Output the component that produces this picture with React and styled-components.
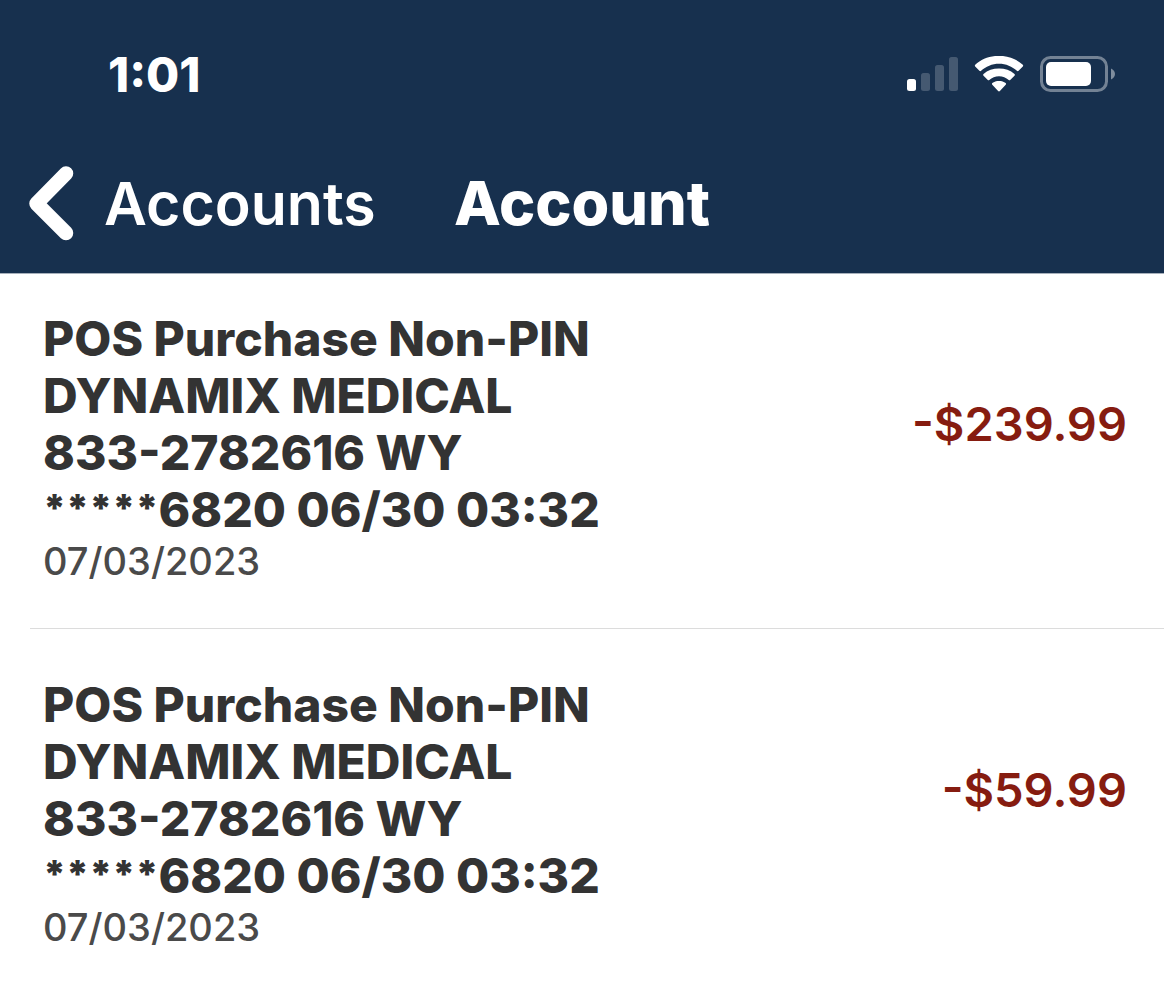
import React from "react";
import styled, { createGlobalStyle } from "styled-components";

const transactions = [
  {
    id: 1,
    lines: ["POS Purchase Non-PIN", "DYNAMIX MEDICAL", "833-2782616 WY"],
    mask: "*****",
    card: "6820 06/30 03:32",
    date: "07/03/2023",
    amount: "-$239.99",
  },
  {
    id: 2,
    lines: ["POS Purchase Non-PIN", "DYNAMIX MEDICAL", "833-2782616 WY"],
    mask: "*****",
    card: "6820 06/30 03:32",
    date: "07/03/2023",
    amount: "-$59.99",
  },
];

const SignalIcon = () => (
  <svg width="52" height="36" viewBox="0 0 52 36" fill="#fff" aria-hidden="true">
    <rect x="1" y="22" width="9" height="12" rx="2.500" />
    <rect x="15" y="16" width="9" height="18" rx="2.500" opacity="0.2" />
    <rect x="29" y="8" width="9" height="26" rx="2.500" opacity="0.2" />
    <rect x="43" y="0" width="9" height="34" rx="2.500" opacity="0.2" />
  </svg>
);

const WifiIcon = () => (
  <svg width="50" height="38" viewBox="0 0 50 38" fill="#fff" aria-hidden="true">
    <path d="M25 7.700c6.900 0 13.200 2.700 17.900 7.100.5.500 1.200.5 1.700 0l4.200-4.300c.5-.5.500-1.200 0-1.700C42.600 3 34.300-.2 25-.2S7.400 3 1.200 8.800c-.5.500-.5 1.200 0 1.700l4.200 4.300c.5.500 1.200.500 1.700 0C11.800 10.400 18.100 7.700 25 7.700Z" />
    <path d="M25 20.300c3.700 0 7.100 1.400 9.700 3.700.5.400 1.100.4 1.500 0l4.300-4.300c.5-.5.500-1.200 0-1.700-4.100-3.700-9.600-5.500-15.500-5.500S13.600 14.300 9.500 18c-.5.500-.5 1.200 0 1.700l4.300 4.300c.4.400 1 .4 1.500 0 2.600-2.300 6-3.700 9.700-3.700Z" />
    <path d="M31.700 28.700c.5-.5.500-1.200 0-1.700-1.800-1.500-4.100-2.100-6.700-2.100s-4.900.6-6.700 2.100c-.5.500-.5 1.200 0 1.700l5.800 6.400c.5.500 1.300.5 1.800 0l5.800-6.400Z" />
  </svg>
);

const BatteryIcon = () => (
  <svg width="76" height="38" viewBox="0 0 76 38" fill="none" aria-hidden="true">
    <rect x="1.500" y="1.500" width="65" height="33" rx="9" stroke="#fff" strokeOpacity="0.4" strokeWidth="3" />
    <path d="M71 12.500c2.400 1 4 3 4 5.500s-1.600 4.500-4 5.500Z" fill="#fff" fillOpacity="0.45" />
    <rect x="6" y="6" width="45" height="24" rx="5" fill="#fff" />
  </svg>
);

const BackIcon = () => (
  <svg width="46" height="76" viewBox="0 0 46 76" fill="none" aria-hidden="true">
    <path d="M38 8.500 8.500 38.500 38 68" stroke="#fff" strokeWidth="14.500" strokeLinecap="round" strokeLinejoin="round" />
  </svg>
);

const App = () => {
  return (
    <>
      <GlobalStyle />
      <Header>
        <StatusBar>
          <Clock>1:01</Clock>
          <StatusIcons>
            <SignalIcon />
            <WifiIcon />
            <BatteryIcon />
          </StatusIcons>
        </StatusBar>
        <NavBar>
          <BackButton type="button">
            <BackIcon />
            Accounts
          </BackButton>
          <Title>Account</Title>
        </NavBar>
      </Header>
      <main>
        <TransactionList>
          {transactions.map((val) => {
            return (
              <Transaction key={val.id}>
                <Summary>
                  <div>
                    {val.lines.map((line) => (
                      <Description key={line}>{line}</Description>
                    ))}
                    <Description>
                      <CardMask>{val.mask}</CardMask>
                      {val.card}
                    </Description>
                  </div>
                  <Amount>{val.amount}</Amount>
                </Summary>
                <PostedDate>{val.date}</PostedDate>
              </Transaction>
            );
          })}
        </TransactionList>
      </main>
    </>
  );
};

const GlobalStyle = createGlobalStyle`
  * {
    box-sizing: border-box;
  }

  body {
    margin: 0;
    background-color: #fff;
    font-family: Inter, "Liberation Sans", sans-serif;
  }
`;

const Header = styled.header`
  background-color: #17304e;
  color: #fff;
  padding-bottom: 20px;
  border-bottom: 1px solid #a7b0bb;
`;

const StatusBar = styled.div`
  display: flex;
  align-items: center;
  justify-content: space-between;
  padding: 46px 48px 0 108px;
`;

const Clock = styled.time`
  font-size: 48px;
  line-height: 58px;
  font-weight: 800;
`;

const StatusIcons = styled.div`
  display: flex;
  align-items: center;
  gap: 16px;
`;

const NavBar = styled.nav`
  display: grid;
  grid-template-columns: 1fr auto 1fr;
  align-items: center;
  height: 100px;
  margin-top: 49px;
  padding: 0 28px;
`;

const BackButton = styled.button`
  display: flex;
  align-items: center;
  justify-self: start;
  gap: 30px;
  padding: 0;
  border: 0;
  background: none;
  color: inherit;
  font-family: inherit;
  font-size: 59px;
  font-weight: 600;
  cursor: pointer;
`;

const Title = styled.h1`
  margin: 0;
  font-size: 61px;
  font-weight: 800;
`;

const TransactionList = styled.ul`
  list-style: none;
  margin: 0;
  padding: 0 0 0 30px;
`;

const Transaction = styled.li`
  padding: 36px 37px 44px 13px;

  & + & {
    border-top: 1px solid #dcdcdc;
    padding-top: 47px;
  }
`;

const Summary = styled.div`
  display: flex;
  align-items: center;
  justify-content: space-between;
`;

const Description = styled.div`
  color: #333;
  font-size: 48px;
  line-height: 57px;
  font-weight: 800;
`;

const CardMask = styled.span`
  font-size: 38px;
  line-height: 54px;
  font-weight: 900;
  vertical-align: top;
`;

const PostedDate = styled.time`
  display: block;
  color: #4a4a4a;
  font-size: 38px;
  line-height: 46px;
  font-weight: 500;
`;

const Amount = styled.span`
  color: #861c10;
  font-size: 47px;
  line-height: 58px;
  font-weight: 600;
`;

export default App;
